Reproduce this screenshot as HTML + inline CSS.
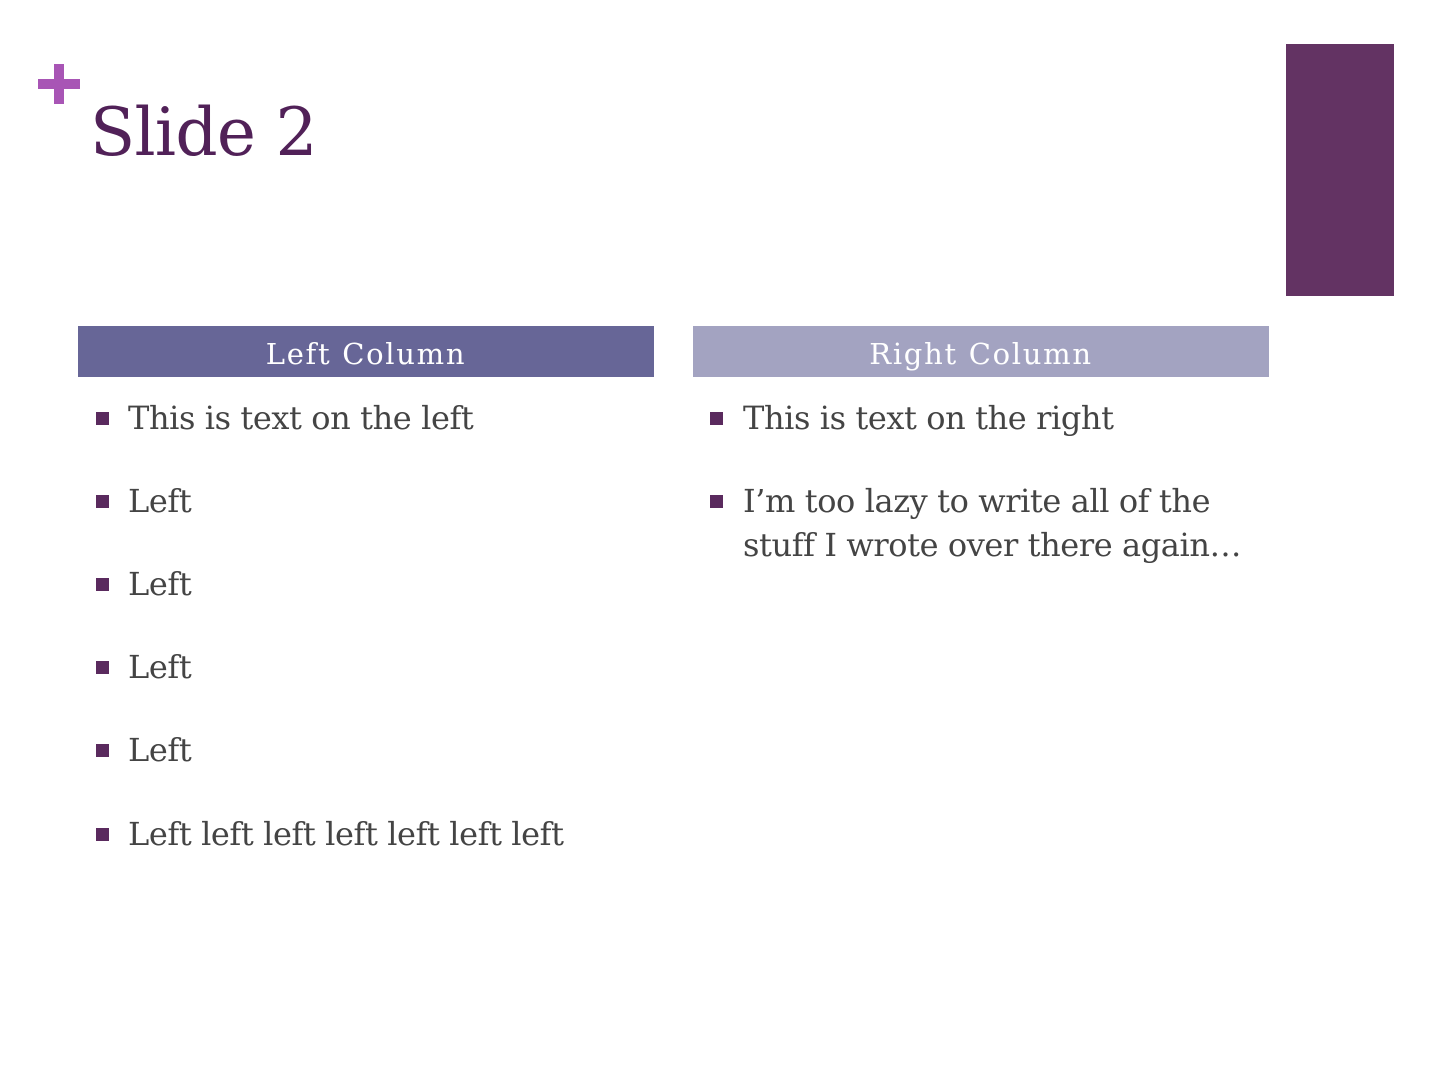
<!DOCTYPE html>
<html><head><meta charset="utf-8"><style>
body{margin:0;width:1440px;height:1080px;background:#fff;position:relative;overflow:hidden;font-family:"DejaVu Serif","Liberation Serif",serif}
.a{position:absolute;white-space:nowrap}
.plus{left:38px;top:64px;width:42px;height:40px}
.plus:before{content:"";position:absolute;left:16px;top:0;width:10px;height:40px;background:#a855b5}
.plus:after{content:"";position:absolute;left:0;top:15px;width:42px;height:10px;background:#a855b5}
.title{left:90px;top:93px;font-size:66px;color:#512158;letter-spacing:-0.7px;line-height:80px}
.bar{left:1286px;top:44px;width:108px;height:252px;background:#633363}
.hd{top:326px;height:51px;width:576px;color:#fff;font-size:29px;line-height:56px;text-align:center;letter-spacing:1.7px}
.b{width:13px;height:13px;background:#5a2a5e}
.t{font-size:32px;color:#444;letter-spacing:-0.4px;line-height:44px}
</style></head><body>
<div class="a plus"></div>
<div class="a title">Slide 2</div>
<div class="a bar"></div>
<div class="a hd" style="left:78px;background:#676697">Left Column</div>
<div class="a hd" style="left:693px;background:#a3a3c1">Right Column</div>

<div class="a b" style="left:96px;top:412px"></div><div class="a t" style="left:128px;top:396px">This is text on the left</div>
<div class="a b" style="left:96px;top:495px"></div><div class="a t" style="left:128px;top:479px">Left</div>
<div class="a b" style="left:96px;top:578px"></div><div class="a t" style="left:128px;top:562px">Left</div>
<div class="a b" style="left:96px;top:661px"></div><div class="a t" style="left:128px;top:645px">Left</div>
<div class="a b" style="left:96px;top:744px"></div><div class="a t" style="left:128px;top:728px">Left</div>
<div class="a b" style="left:96px;top:828px"></div><div class="a t" style="left:128px;top:812px">Left left left left left left left</div>

<div class="a b" style="left:710px;top:412px"></div><div class="a t" style="left:743px;top:396px">This is text on the right</div>
<div class="a b" style="left:710px;top:495px"></div><div class="a t" style="left:743px;top:479px">I’m too lazy to write all of the<br>stuff I wrote over there again…</div>
</body></html>
